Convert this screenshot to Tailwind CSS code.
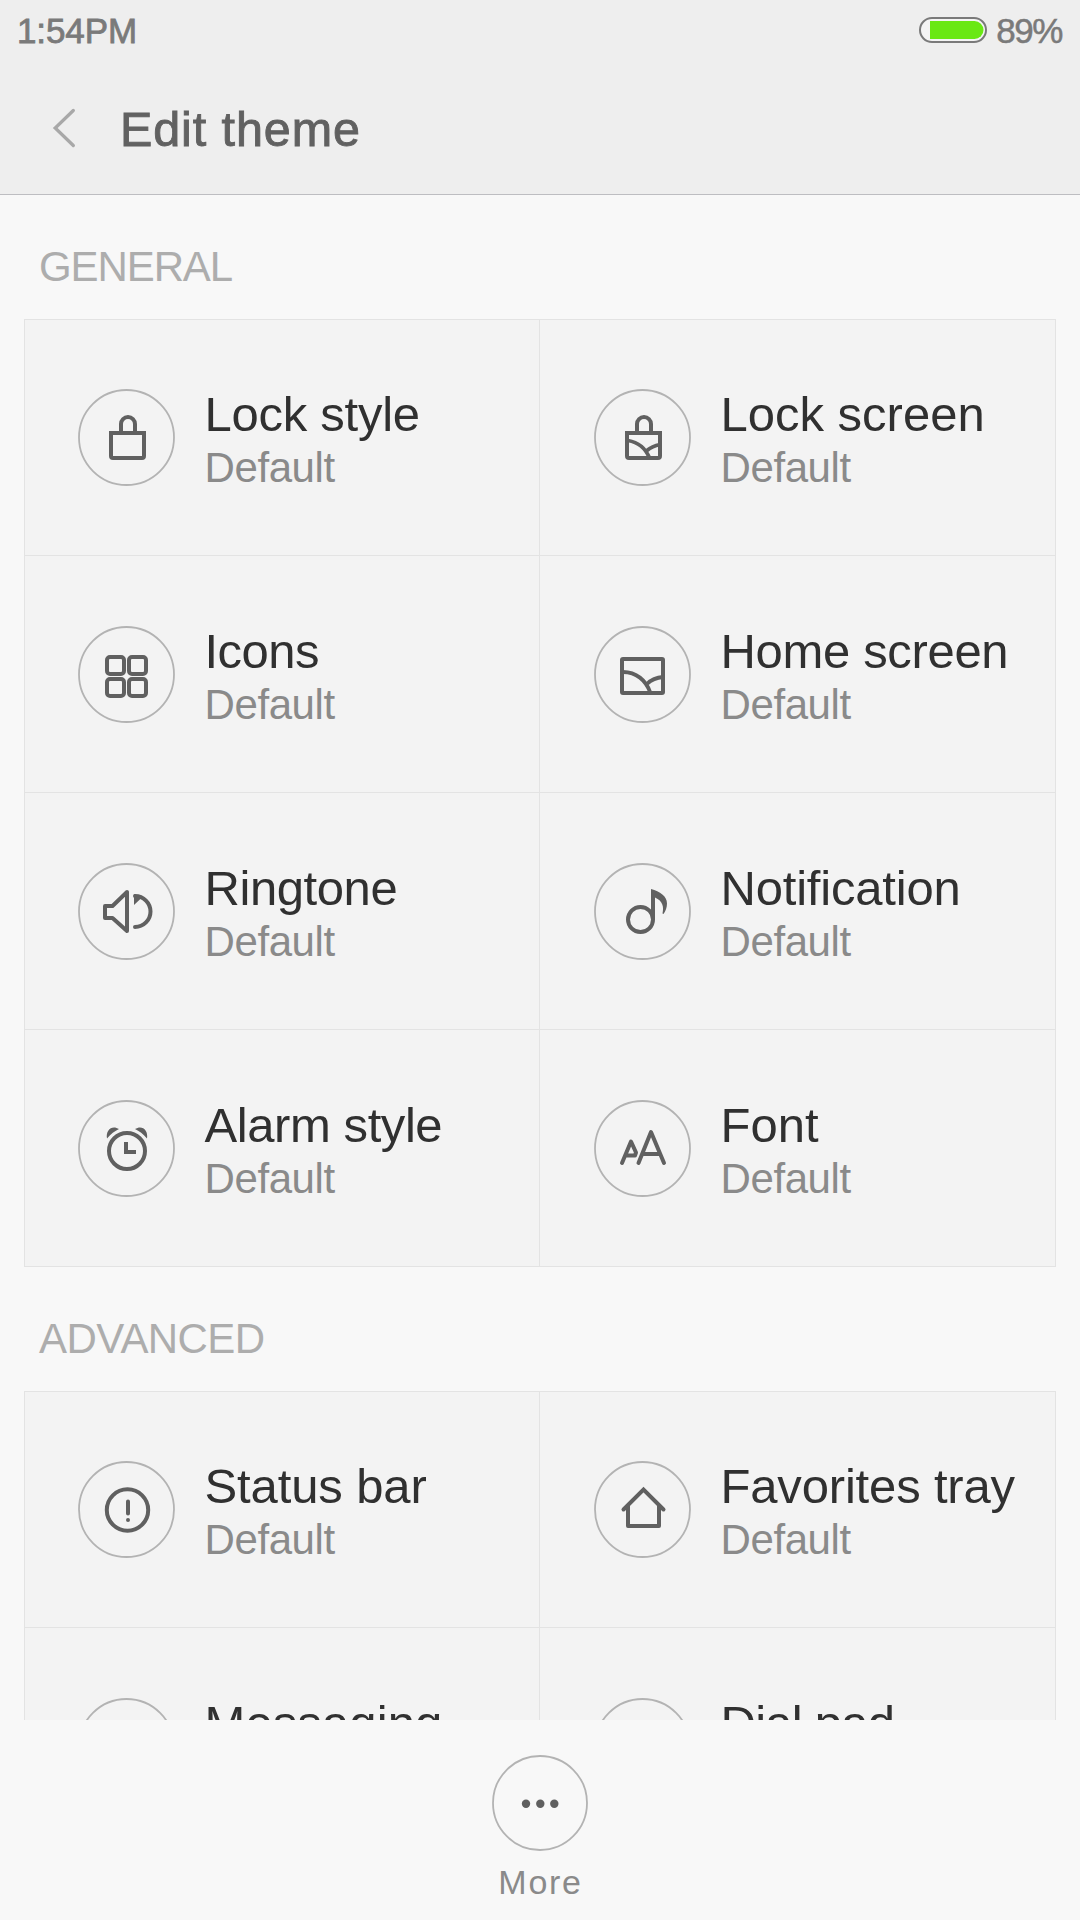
<!DOCTYPE html>
<html lang="en">
<head>
<meta charset="utf-8">
<title>Edit theme</title>
<script src="https://cdn.jsdelivr.net/npm/@tailwindcss/browser@4"></script>
</head>
<body class="bg-[#f8f8f8]">
<div class="flex h-[1920px] w-[1080px] flex-col overflow-hidden bg-[#f8f8f8] font-['Liberation_Sans',Arial,sans-serif]">

  <header class="h-[195px] shrink-0 border-b border-[#bdbdc1] bg-[#eeeeee]">
    <div class="flex h-15 items-center justify-between pr-[18px] pl-[17px] text-[35px] leading-10 text-[#7a7a7a]">
      <span class="mt-px tracking-[-0.1px] [-webkit-text-stroke:0.8px_#7a7a7a]">1:54PM</span>
      <div class="flex items-center gap-2">
        <svg class="h-[28px] w-[70px]" viewBox="0 0 70 28" fill="none">
          <rect x="2" y="2" width="66" height="24" rx="12" fill="#f4f4f4" stroke="#7a7a7a" stroke-width="2"/>
          <path d="M12 5H56.500a9 9 0 0 1 0 18H12z" fill="#6ae813"/>
        </svg>
        <span class="mt-px tracking-[-1.4px] [-webkit-text-stroke:0.5px_#7a7a7a]">89%</span>
      </div>
    </div>
    <div class="flex h-[134px] items-start pl-[51px]">
      <svg class="mt-12 h-10 w-[26px]" viewBox="0 0 26 40" fill="none" stroke="#a8a8a8" stroke-width="3.3" stroke-linecap="round"><path d="M22.300 2.500L4.200 20L22.300 37.500" /></svg>
      <h1 class="mt-[41px] ml-[43px] text-[48.5px] leading-14 tracking-[0.9px] text-[#616161] [-webkit-text-stroke:0.9px_#616161]">Edit theme</h1>
    </div>
  </header>

  <main class="h-[1525px] shrink-0 overflow-hidden px-6">
    <h2 class="h-[124px] pt-[48px] pl-[15px] text-[42px] leading-12 tracking-[-1.1px] text-[#adadad]">GENERAL</h2>
    <div class="grid auto-rows-[237px] grid-cols-2 bg-[#f3f3f3] shadow-[inset_1px_1px_0_#e3e3e3]">
      <div class="flex items-start gap-[29.5px] border-r border-b border-[#e3e3e3] pl-[54px]">
        <svg class="mt-[70px] size-[97px] shrink-0" viewBox="0 0 97 97" fill="none" stroke="#606060" stroke-width="4">
          <circle cx="48.500" cy="48.500" r="47.500" stroke="#b3b3b3" stroke-width="1.800"/>
          <path d="M33 44h33v23q0 2-2 2H35q-2 0-2-2zM43 44V35a7 7 0 0 1 14 0v9"/>
        </svg>
        <div class="pt-[67px]"><div class="text-[49px] leading-14 tracking-[-0.25px] text-[#303030]">Lock style</div><div class="mt-0.5 text-[42px] leading-12 tracking-[-0.4px] text-[#8a8a8a]">Default</div></div>
      </div>
      <div class="flex items-start gap-[29.5px] border-r border-b border-[#e3e3e3] pl-[54px]">
        <svg class="mt-[70px] size-[97px] shrink-0" viewBox="0 0 97 97" fill="none" stroke="#606060" stroke-width="4">
          <circle cx="48.500" cy="48.500" r="47.500" stroke="#b3b3b3" stroke-width="1.800"/>
          <path d="M33 44h33v23q0 2-2 2H35q-2 0-2-2zM43 44V35a7 7 0 0 1 14 0v9"/>
          <path d="M34 51.500C43 53 51 58 55.500 69M53 61.500C57 58 61 56.500 66 55.500" stroke-width="3.800"/>
        </svg>
        <div class="pt-[67px]"><div class="text-[49px] leading-14 text-[#303030]">Lock screen</div><div class="mt-0.5 text-[42px] leading-12 tracking-[-0.4px] text-[#8a8a8a]">Default</div></div>
      </div>
      <div class="flex items-start gap-[29.5px] border-r border-b border-[#e3e3e3] pl-[54px]">
        <svg class="mt-[70px] size-[97px] shrink-0" viewBox="0 0 97 97" fill="none" stroke="#606060" stroke-width="4">
          <circle cx="48.500" cy="48.500" r="47.500" stroke="#b3b3b3" stroke-width="1.800"/>
          <rect x="29" y="31" width="17" height="17" rx="3"/><rect x="51" y="31" width="17" height="17" rx="3"/>
          <rect x="29" y="53" width="17" height="17" rx="3"/><rect x="51" y="53" width="17" height="17" rx="3"/>
        </svg>
        <div class="pt-[67px]"><div class="text-[49px] leading-14 tracking-[-0.5px] text-[#303030]">Icons</div><div class="mt-0.5 text-[42px] leading-12 tracking-[-0.4px] text-[#8a8a8a]">Default</div></div>
      </div>
      <div class="flex items-start gap-[29.5px] border-r border-b border-[#e3e3e3] pl-[54px]">
        <svg class="mt-[70px] size-[97px] shrink-0" viewBox="0 0 97 97" fill="none" stroke="#606060" stroke-width="4">
          <circle cx="48.500" cy="48.500" r="47.500" stroke="#b3b3b3" stroke-width="1.800"/>
          <rect x="28" y="33" width="41" height="34" rx="1"/>
          <path d="M29 46C42 46 52 54 56.500 67M53 58C57 54 62 51.500 69 51" stroke-width="3.800"/>
        </svg>
        <div class="pt-[67px]"><div class="text-[49px] leading-14 tracking-[-0.33px] text-[#303030]">Home screen</div><div class="mt-0.5 text-[42px] leading-12 tracking-[-0.4px] text-[#8a8a8a]">Default</div></div>
      </div>
      <div class="flex items-start gap-[29.5px] border-r border-b border-[#e3e3e3] pl-[54px]">
        <svg class="mt-[70px] size-[97px] shrink-0" viewBox="0 0 97 97" fill="none" stroke="#606060" stroke-width="4">
          <circle cx="48.500" cy="48.500" r="47.500" stroke="#b3b3b3" stroke-width="1.800"/>
          <path d="M27 43h7.500L49 29v39L34.500 55H27z" stroke-linejoin="round"/>
          <path d="M57 33a15.500 15.500 0 0 1 0 31" stroke-linecap="round"/>
          <path d="M56 31V42L64 34.500z" fill="#606060" stroke="none"/>
        </svg>
        <div class="pt-[67px]"><div class="text-[49px] leading-14 tracking-[-0.42px] text-[#303030]">Ringtone</div><div class="mt-0.5 text-[42px] leading-12 tracking-[-0.4px] text-[#8a8a8a]">Default</div></div>
      </div>
      <div class="flex items-start gap-[29.5px] border-r border-b border-[#e3e3e3] pl-[54px]">
        <svg class="mt-[70px] size-[97px] shrink-0" viewBox="0 0 97 97" fill="none" stroke="#606060" stroke-width="4">
          <circle cx="48.500" cy="48.500" r="47.500" stroke="#b3b3b3" stroke-width="1.800"/>
          <circle cx="46.500" cy="56.500" r="12.500"/>
          <path d="M57 26C66 28.500 73 33 73 40.500C73 44.500 71.500 48.500 69.500 51L68.500 50.500C70 44 69 38 61 34.500V57H57z" fill="#606060" stroke="none"/>
        </svg>
        <div class="pt-[67px]"><div class="text-[49px] leading-14 tracking-[-0.2px] text-[#303030]">Notification</div><div class="mt-0.5 text-[42px] leading-12 tracking-[-0.4px] text-[#8a8a8a]">Default</div></div>
      </div>
      <div class="flex items-start gap-[29.5px] border-r border-b border-[#e3e3e3] pl-[54px]">
        <svg class="mt-[70px] size-[97px] shrink-0" viewBox="0 0 97 97" fill="none" stroke="#606060" stroke-width="4">
          <circle cx="48.500" cy="48.500" r="47.500" stroke="#b3b3b3" stroke-width="1.800"/>
          <circle cx="49" cy="51" r="18"/>
          <path d="M48 42v10h10"/>
          <path d="M29 38.500C27.500 30 34 24.500 41 29C37 31 32.500 34 29 38.500zM69 38.500C70.500 30 64 24.500 57 29C61 31 65.500 34 69 38.500z" fill="#606060" stroke="none"/>
        </svg>
        <div class="pt-[67px]"><div class="text-[49px] leading-14 tracking-[-0.42px] text-[#303030]">Alarm style</div><div class="mt-0.5 text-[42px] leading-12 tracking-[-0.4px] text-[#8a8a8a]">Default</div></div>
      </div>
      <div class="flex items-start gap-[29.5px] border-r border-b border-[#e3e3e3] pl-[54px]">
        <svg class="mt-[70px] size-[97px] shrink-0" viewBox="0 0 97 97" fill="none" stroke="#606060" stroke-width="4">
          <circle cx="48.500" cy="48.500" r="47.500" stroke="#b3b3b3" stroke-width="1.800"/>
          <path d="M44.500 63L57 32L70 63M49 54H66M28 63L37 41.500L42 52.500L41 55.500H31.500" stroke-linecap="round" stroke-linejoin="round"/>
        </svg>
        <div class="pt-[67px]"><div class="text-[49px] leading-14 text-[#303030]">Font</div><div class="mt-0.5 text-[42px] leading-12 tracking-[-0.4px] text-[#8a8a8a]">Default</div></div>
      </div>
    </div>

    <h2 class="h-[124px] pt-[48px] pl-[15px] text-[42px] leading-12 tracking-[-0.6px] text-[#adadad]">ADVANCED</h2>
    <div class="grid auto-rows-[237px] grid-cols-2 bg-[#f3f3f3] shadow-[inset_1px_1px_0_#e3e3e3]">
      <div class="flex items-start gap-[29.5px] border-r border-b border-[#e3e3e3] pl-[54px]">
        <svg class="mt-[70px] size-[97px] shrink-0" viewBox="0 0 97 97" fill="none" stroke="#606060" stroke-width="4">
          <circle cx="48.500" cy="48.500" r="47.500" stroke="#b3b3b3" stroke-width="1.800"/>
          <circle cx="49.500" cy="49" r="20.700"/>
          <path d="M50 40.500V52.500M50 59v.01" stroke-linecap="round"/>
        </svg>
        <div class="pt-[67px]"><div class="text-[49px] leading-14 tracking-[-0.12px] text-[#303030]">Status bar</div><div class="mt-0.5 text-[42px] leading-12 tracking-[-0.4px] text-[#8a8a8a]">Default</div></div>
      </div>
      <div class="flex items-start gap-[29.5px] border-r border-b border-[#e3e3e3] pl-[54px]">
        <svg class="mt-[70px] size-[97px] shrink-0" viewBox="0 0 97 97" fill="none" stroke="#606060" stroke-width="4">
          <circle cx="48.500" cy="48.500" r="47.500" stroke="#b3b3b3" stroke-width="1.800"/>
          <path d="M29.500 48.500L49.500 28.500L69.500 48.500" stroke-linecap="round"/><path d="M34 45V65H65V45" stroke-linejoin="round"/>
        </svg>
        <div class="pt-[67px]"><div class="text-[49px] leading-14 tracking-[-0.17px] text-[#303030]">Favorites tray</div><div class="mt-0.5 text-[42px] leading-12 tracking-[-0.4px] text-[#8a8a8a]">Default</div></div>
      </div>
      <div class="flex items-start gap-[29.5px] border-r border-b border-[#e3e3e3] pl-[54px]">
        <svg class="mt-[70px] size-[97px] shrink-0" viewBox="0 0 97 97" fill="none"><circle cx="48.500" cy="48.500" r="47.500" stroke="#b3b3b3" stroke-width="1.800"/></svg>
        <div class="pt-[67px]"><div class="text-[49px] leading-14 tracking-[0.1px] text-[#303030]">Messaging</div></div>
      </div>
      <div class="flex items-start gap-[29.5px] border-r border-b border-[#e3e3e3] pl-[54px]">
        <svg class="mt-[70px] size-[97px] shrink-0" viewBox="0 0 97 97" fill="none"><circle cx="48.500" cy="48.500" r="47.500" stroke="#b3b3b3" stroke-width="1.800"/></svg>
        <div class="pt-[67px]"><div class="text-[49px] leading-14 tracking-[-0.75px] text-[#303030]">Dial pad</div></div>
      </div>
    </div>
  </main>

  <footer class="flex h-[200px] shrink-0 flex-col items-center pt-[35px]">
    <svg class="size-24" viewBox="0 0 96 96" fill="none">
      <circle cx="48" cy="48" r="47" stroke="#b3b3b3" stroke-width="1.800"/>
      <g fill="#606060"><circle cx="34" cy="48.700" r="4.200"/><circle cx="48.300" cy="48.700" r="4.200"/><circle cx="62.300" cy="48.700" r="4.200"/></g>
    </svg>
    <span class="mt-[11px] pl-px text-[34px] leading-10 tracking-[1.7px] text-[#8a8a8a]">More</span>
  </footer>
</div>
</body>
</html>
